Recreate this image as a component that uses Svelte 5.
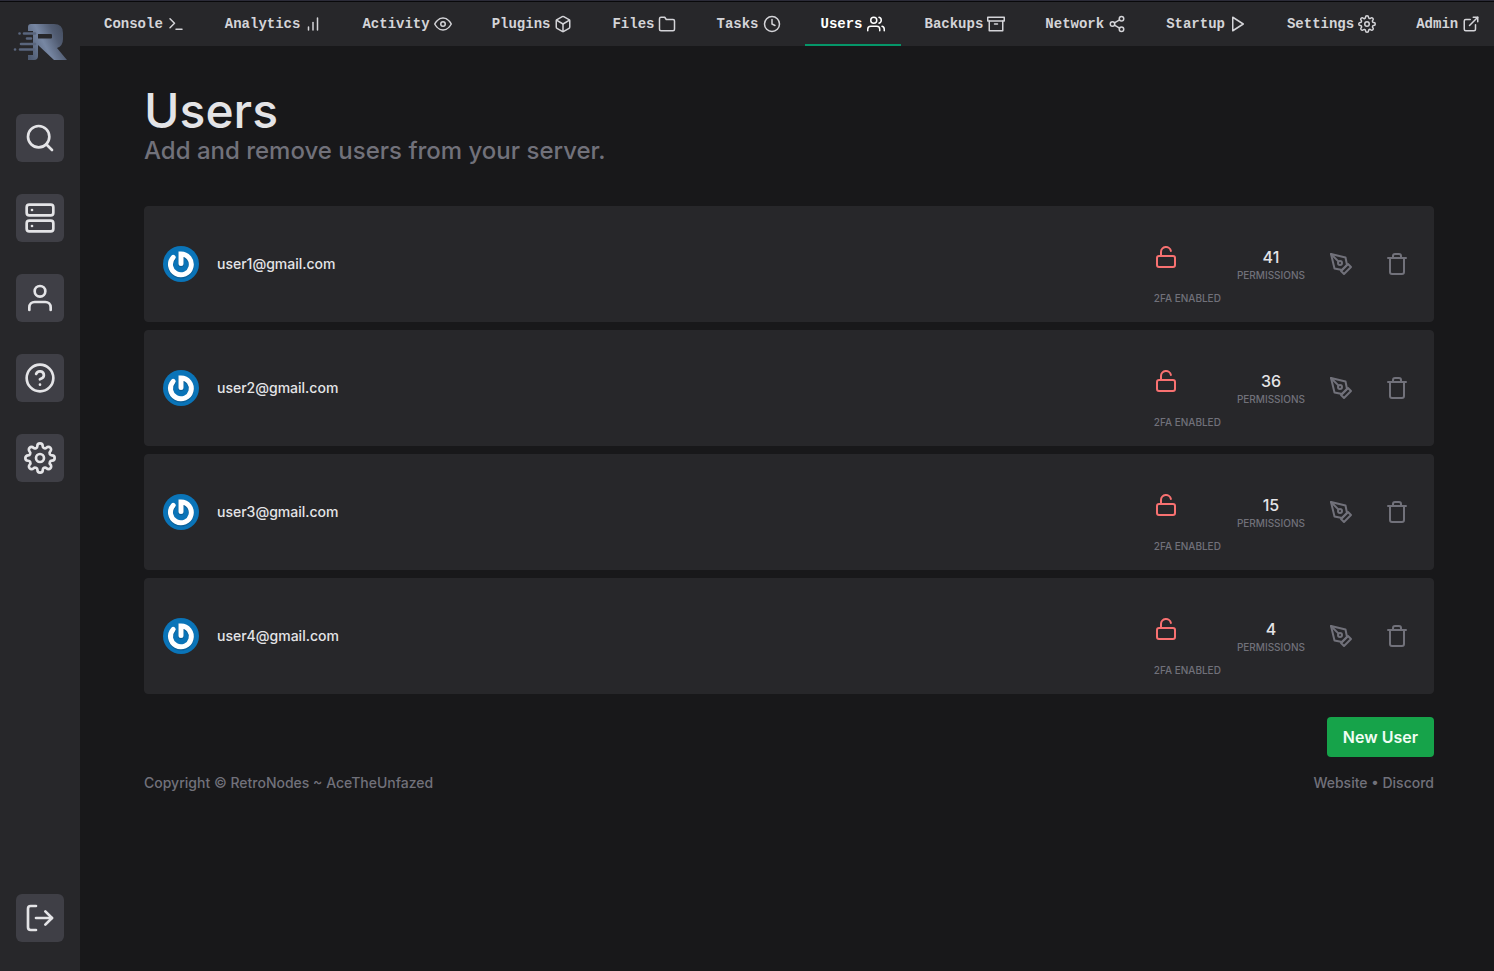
<script lang="ts">
    type Tab = { name: string; icon: string };
    type User = { email: string; permissions: number };

    const icons: Record<string, string> = {
        terminal: '<polyline points="4 17 10 11 4 5"/><line x1="12" y1="19" x2="20" y2="19"/>',
        chart: '<line x1="12" y1="20" x2="12" y2="10"/><line x1="18" y1="20" x2="18" y2="4"/><line x1="6" y1="20" x2="6" y2="16"/>',
        eye: '<path d="M1 12s4-8 11-8 11 8 11 8-4 8-11 8-11-8-11-8z"/><circle cx="12" cy="12" r="3"/>',
        box: '<path d="M21 16V8a2 2 0 0 0-1-1.73l-7-4a2 2 0 0 0-2 0l-7 4A2 2 0 0 0 3 8v8a2 2 0 0 0 1 1.73l7 4a2 2 0 0 0 2 0l7-4A2 2 0 0 0 21 16z"/><polyline points="3.27 6.96 12 12.01 20.73 6.96"/><line x1="12" y1="22.08" x2="12" y2="12"/>',
        folder: '<path d="M22 19a2 2 0 0 1-2 2H4a2 2 0 0 1-2-2V5a2 2 0 0 1 2-2h5l2 3h9a2 2 0 0 1 2 2z"/>',
        clock: '<circle cx="12" cy="12" r="10"/><polyline points="12 6 12 12 16 14"/>',
        users: '<path d="M17 21v-2a4 4 0 0 0-4-4H5a4 4 0 0 0-4 4v2"/><circle cx="9" cy="7" r="4"/><path d="M23 21v-2a4 4 0 0 0-3-3.87"/><path d="M16 3.13a4 4 0 0 1 0 7.75"/>',
        archive: '<polyline points="21 8 21 21 3 21 3 8"/><rect x="1" y="3" width="22" height="5"/><line x1="10" y1="12" x2="14" y2="12"/>',
        share: '<circle cx="18" cy="5" r="3"/><circle cx="6" cy="12" r="3"/><circle cx="18" cy="19" r="3"/><line x1="8.59" y1="13.51" x2="15.42" y2="17.49"/><line x1="15.41" y1="6.51" x2="8.59" y2="10.49"/>',
        play: '<polygon points="5 3 19 12 5 21 5 3"/>',
        settings: '<circle cx="12" cy="12" r="3"/><path d="M19.4 15a1.65 1.65 0 0 0 .33 1.82l.06.06a2 2 0 0 1 0 2.83 2 2 0 0 1-2.83 0l-.06-.06a1.65 1.65 0 0 0-1.82-.33 1.65 1.65 0 0 0-1 1.51V21a2 2 0 0 1-2 2 2 2 0 0 1-2-2v-.09A1.65 1.65 0 0 0 9 19.4a1.65 1.65 0 0 0-1.82.33l-.06.06a2 2 0 0 1-2.83 0 2 2 0 0 1 0-2.83l.06-.06a1.65 1.65 0 0 0 .33-1.82 1.65 1.65 0 0 0-1.51-1H3a2 2 0 0 1-2-2 2 2 0 0 1 2-2h.09A1.65 1.65 0 0 0 4.6 9a1.65 1.65 0 0 0-.33-1.82l-.06-.06a2 2 0 0 1 0-2.83 2 2 0 0 1 2.83 0l.06.06a1.65 1.65 0 0 0 1.82.33H9a1.65 1.65 0 0 0 1-1.51V3a2 2 0 0 1 2-2 2 2 0 0 1 2 2v.09a1.65 1.65 0 0 0 1 1.51 1.65 1.65 0 0 0 1.82-.33l.06-.06a2 2 0 0 1 2.83 0 2 2 0 0 1 0 2.83l-.06.06a1.65 1.65 0 0 0-.33 1.82V9a1.65 1.65 0 0 0 1.51 1H21a2 2 0 0 1 2 2 2 2 0 0 1-2 2h-.09a1.65 1.65 0 0 0-1.51 1z"/>',
        external: '<path d="M18 13v6a2 2 0 0 1-2 2H5a2 2 0 0 1-2-2V8a2 2 0 0 1 2-2h6"/><polyline points="15 3 21 3 21 9"/><line x1="10" y1="14" x2="21" y2="3"/>',
        search: '<circle cx="11" cy="11" r="8"/><line x1="21" y1="21" x2="16.65" y2="16.65"/>',
        server: '<rect x="2" y="2" width="20" height="8" rx="2" ry="2"/><rect x="2" y="14" width="20" height="8" rx="2" ry="2"/><line x1="6" y1="6" x2="6.01" y2="6"/><line x1="6" y1="18" x2="6.01" y2="18"/>',
        user: '<path d="M20 21v-2a4 4 0 0 0-4-4H8a4 4 0 0 0-4 4v2"/><circle cx="12" cy="7" r="4"/>',
        help: '<circle cx="12" cy="12" r="10"/><path d="M9.09 9a3 3 0 0 1 5.83 1c0 2-3 3-3 3"/><line x1="12" y1="17" x2="12.01" y2="17"/>',
        logout: '<path d="M9 21H5a2 2 0 0 1-2-2V5a2 2 0 0 1 2-2h4"/><polyline points="16 17 21 12 16 7"/><line x1="21" y1="12" x2="9" y2="12"/>',
        unlock: '<rect x="3" y="11" width="18" height="11" rx="2" ry="2"/><path d="M7 11V7a5 5 0 0 1 9.9-1"/>',
        pen: '<path d="M12 19l7-7 3 3-7 7-3-3z"/><path d="M18 13l-1.5-7.5L2 2l3.5 14.5L13 18l5-5z"/><path d="M2 2l7.586 7.586"/><circle cx="11" cy="11" r="2"/>',
        trash: '<polyline points="3 6 5 6 21 6"/><path d="M19 6v14a2 2 0 0 1-2 2H7a2 2 0 0 1-2-2V6m3 0V4a2 2 0 0 1 2-2h4a2 2 0 0 1 2 2v2"/>'
    };

    const tabs: Tab[] = [
        { name: "Console", icon: "terminal" },
        { name: "Analytics", icon: "chart" },
        { name: "Activity", icon: "eye" },
        { name: "Plugins", icon: "box" },
        { name: "Files", icon: "folder" },
        { name: "Tasks", icon: "clock" },
        { name: "Users", icon: "users" },
        { name: "Backups", icon: "archive" },
        { name: "Network", icon: "share" },
        { name: "Startup", icon: "play" },
        { name: "Settings", icon: "settings" },
        { name: "Admin", icon: "external" }
    ];

    const links: Tab[] = [
        { name: "Search", icon: "search" },
        { name: "Servers", icon: "server" },
        { name: "Account", icon: "user" },
        { name: "Help", icon: "help" },
        { name: "Settings", icon: "settings" }
    ];

    let active = $state("Users");
    let users = $state<User[]>([
        { email: "user1@gmail.com", permissions: 41 },
        { email: "user2@gmail.com", permissions: 36 },
        { email: "user3@gmail.com", permissions: 15 },
        { email: "user4@gmail.com", permissions: 4 }
    ]);

    function remove(email: string) {
        users = users.filter((u) => u.email !== email);
    }
</script>

{#snippet icon(name: string, size: number)}
    <svg class="icon" width={size} height={size} viewBox="0 0 24 24" aria-hidden="true">{@html icons[name]}</svg>
{/snippet}

<div class="app">
    <aside class="sidebar">
        <a class="logo" href="#home" aria-label="Home">
            <svg width="56" height="40" viewBox="0 0 56 40" aria-hidden="true">
                <defs>
                    <linearGradient id="steel" gradientUnits="userSpaceOnUse" x1="14" y1="30" x2="54" y2="10">
                        <stop offset="0" stop-color="#4c586e" />
                        <stop offset="0.45" stop-color="#7787a3" />
                        <stop offset="0.75" stop-color="#525d73" />
                        <stop offset="1" stop-color="#434c5e" />
                    </linearGradient>
                </defs>
                <path fill="url(#steel)" fill-rule="evenodd" d="M19 2h23q9 0 9 9v6q0 7-6 9l10 12H42L26 23v11q0 4-4 4h-6v-5h5V9h-5V5q0-3 3-3zM26 12v4.500h13q1 0 1-1v-2.500q0-1-1-1z" />
                <g stroke="#5a667d" stroke-width="2.600" stroke-linecap="round">
                    <path d="M12 11.500h11M15 16.500h4M9 22h14M8 27.500h14" />
                    <path d="M7.500 11.500h.1M3 27.500h.1" />
                </g>
            </svg>
        </a>
        <nav class="side-links" aria-label="Main">
            {#each links as link}
                <a class="side-link" href="#{link.name.toLowerCase()}" aria-label={link.name}>{@render icon(link.icon, 32)}</a>
            {/each}
        </nav>
        <button class="side-link" aria-label="Log out">{@render icon("logout", 32)}</button>
    </aside>

    <div class="content">
        <nav class="tabs" aria-label="Server">
            {#each tabs as tab}
                <a class="tab" class:active={tab.name === active} href="#{tab.name.toLowerCase()}" onclick={() => (active = tab.name)}>
                    {tab.name}{@render icon(tab.icon, 18)}
                </a>
            {/each}
        </nav>

        <main>
            <h1>Users</h1>
            <p class="subtitle">Add and remove users from your server.</p>

            <ul class="users">
                {#each users as user (user.email)}
                    <li class="user">
                        <svg class="avatar" width="36" height="36" viewBox="0 0 36 36" aria-hidden="true">
                            <circle cx="18" cy="18" r="18" fill="#0a74b8" />
                            <path d="M10.200 11.400A10.400 10.400 0 1 0 18 8V17.500" fill="none" stroke="#0b5f97" stroke-width="5.500" stroke-linecap="round" transform="translate(0 1)" />
                            <path d="M10.200 11.400A10.400 10.400 0 1 0 18 8V17.500" fill="none" stroke="#fff" stroke-width="5" stroke-linecap="round" stroke-linejoin="miter" />
                        </svg>
                        <span class="email">{user.email}</span>
                        <div class="twofa">
                            {@render icon("unlock", 24)}
                            <span class="label">2FA Enabled</span>
                        </div>
                        <div class="permissions">
                            <span class="count">{user.permissions}</span>
                            <span class="label">Permissions</span>
                        </div>
                        <div class="actions">
                            <button aria-label="Edit {user.email}">{@render icon("pen", 24)}</button>
                            <button aria-label="Delete {user.email}" onclick={() => remove(user.email)}>{@render icon("trash", 24)}</button>
                        </div>
                    </li>
                {/each}
            </ul>

            <button class="new-user">New User</button>

            <footer>
                <span>Copyright © RetroNodes ~ AceTheUnfazed</span>
                <span><a href="#website">Website</a> • <a href="#discord">Discord</a></span>
            </footer>
        </main>
    </div>
</div>

<style>
    :global(body) {
        margin: 0;
        background: #18181b;
    }

    .app {
        display: flex;
        box-sizing: border-box;
        min-height: 100vh;
        border-top: 1px solid #2b2b38;
        background: #18181a;
        color: #e4e4e7;
        font-family: Inter, "Liberation Sans", sans-serif;
        font-weight: 500;
    }

    a {
        color: inherit;
        text-decoration: none;
    }

    button {
        border: 0;
        padding: 0;
        background: none;
        color: inherit;
        font: inherit;
        cursor: pointer;
    }

    .icon {
        display: block;
        flex: none;
        fill: none;
        stroke: currentColor;
        stroke-width: 2;
        stroke-linecap: round;
        stroke-linejoin: round;
    }

    .sidebar {
        display: flex;
        flex: none;
        flex-direction: column;
        align-items: center;
        box-sizing: border-box;
        width: 80px;
        padding: 20px 0 29px;
        border-top: 1px solid #09090b;
        background: #27272a;
    }

    .logo svg {
        display: block;
    }

    .side-links {
        display: flex;
        flex: 1;
        flex-direction: column;
        gap: 32px;
        padding-top: 52px;
    }

    .side-link {
        display: flex;
        align-items: center;
        justify-content: center;
        width: 48px;
        height: 48px;
        border-radius: 6px;
        background: #3f3f46;
    }

    .content {
        flex: 1;
        min-width: 0;
    }

    .tabs {
        display: flex;
        gap: 8px;
        height: 44px;
        padding-left: 8px;
        border-top: 1px solid #09090b;
        background: #27272a;
        color: #d4d4d8;
        font: bold 14px "Liberation Mono", monospace;
    }

    .tab {
        display: flex;
        flex: none;
        align-items: center;
        gap: 4px;
        box-sizing: border-box;
        padding: 2px 16px 0;
        border-bottom: 2px solid transparent;
    }

    .tab.active {
        border-bottom-color: #059669;
        color: #fff;
    }

    main {
        padding: 41px 60px 0 64px;
    }

    h1 {
        margin: 0;
        font-size: 48px;
        font-weight: 500;
        line-height: 48px;
    }

    .subtitle {
        margin: 0;
        color: #71717a;
        font-size: 24px;
        line-height: 32px;
    }

    .users {
        display: flex;
        flex-direction: column;
        gap: 8px;
        margin: 39px 0 23px;
        padding: 0;
        list-style: none;
    }

    .user {
        display: flex;
        align-items: center;
        padding: 17px 18px;
        border: 1px solid #27272a;
        border-radius: 4px;
        background: #27272a;
    }

    .avatar {
        flex: none;
    }

    .email {
        flex: 1;
        margin-left: 18px;
        padding-bottom: 2px;
        font-size: 14px;
    }

    .label {
        color: #71717a;
        font-size: 10px;
        line-height: 12px;
        text-transform: uppercase;
    }

    .twofa {
        display: flex;
        flex-direction: column;
        gap: 23px;
        padding-top: 21px;
        color: #f87171;
    }

    .permissions {
        display: flex;
        flex-direction: column;
        align-items: center;
        margin: 0 18px 0 16px;
        padding-bottom: 2px;
    }

    .count {
        font-size: 16px;
        line-height: 24px;
    }

    .actions {
        display: flex;
        gap: 20px;
        color: #71717a;
    }

    .actions button {
        padding: 6px;
    }

    .new-user {
        display: block;
        margin-left: auto;
        padding: 8px 16px;
        border-radius: 4px;
        background: #16a34a;
        color: #f0fdf4;
        font-size: 16px;
        font-weight: 600;
        line-height: 24px;
    }

    footer {
        display: flex;
        justify-content: space-between;
        padding: 16px 0;
        color: #71717a;
        font-size: 14px;
        line-height: 20px;
    }
</style>
